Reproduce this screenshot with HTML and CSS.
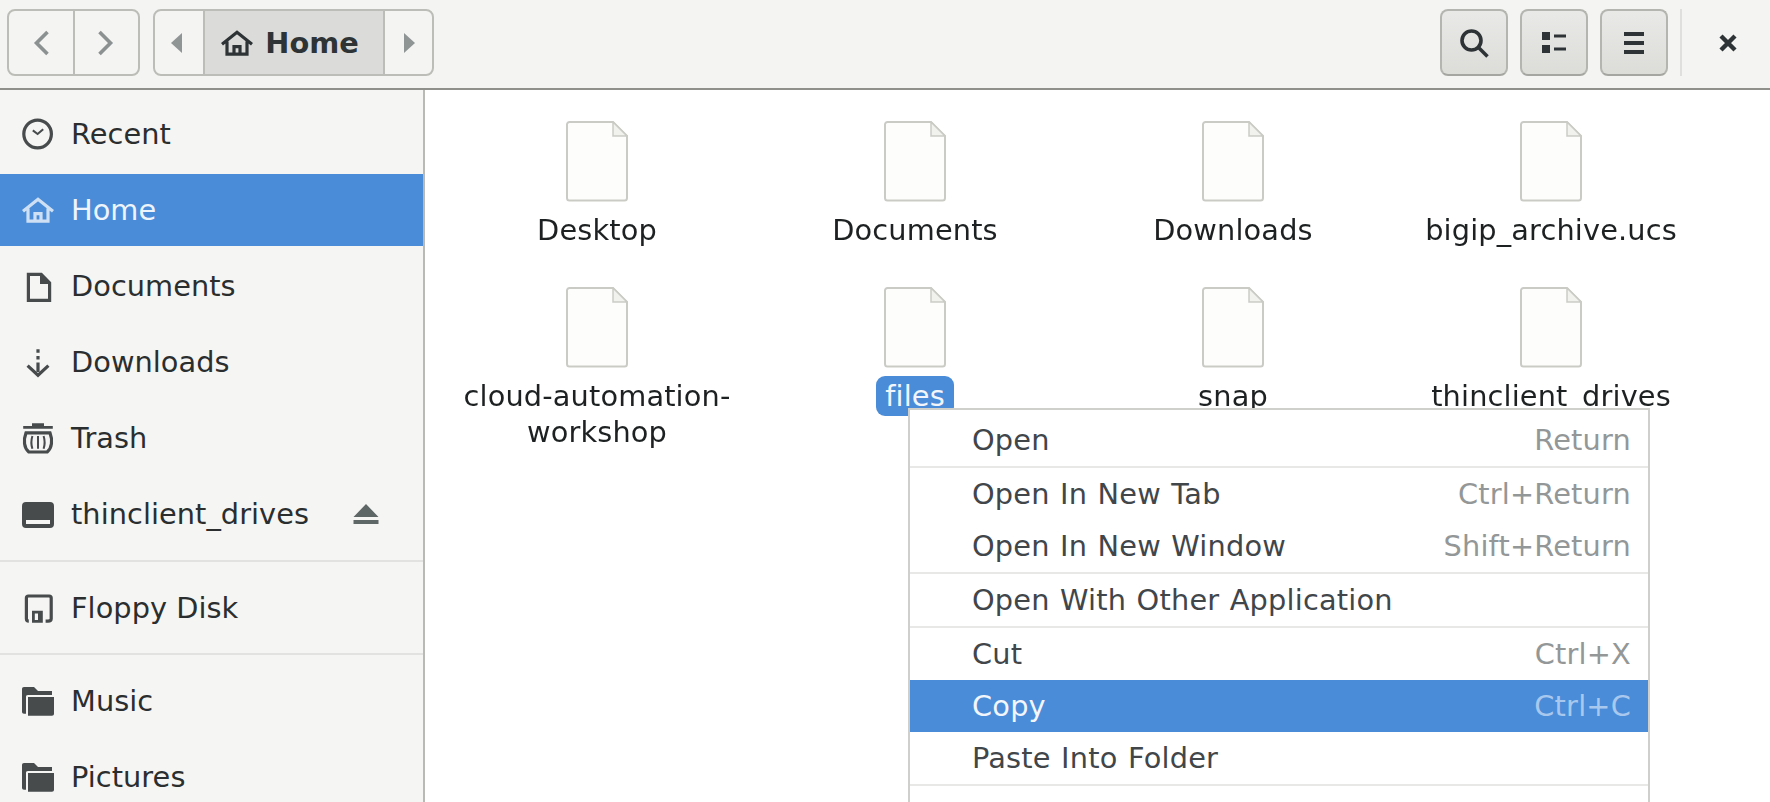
FILE: index.html
```html
<!DOCTYPE html>
<html lang="en">
<head>
    <meta charset="UTF-8">
    <title>Home</title>
    <link rel="stylesheet" href="styles.css">
</head>
<body>

<svg class="defs" width="0" height="0">
    <symbol id="page" viewBox="0 0 62 81">
        <path class="page-body" d="M3.5 1 H47 L61 15 V77 A2.5 2.5 0 0 1 58.5 79.5 H3.5 A2.5 2.5 0 0 1 1 77 V3.5 A2.5 2.5 0 0 1 3.5 1 Z"/>
        <path class="page-fold" d="M47 1 V15 H61 Z"/>
    </symbol>
</svg>

<header class="toolbar">
    <div class="btn-group nav-group">
        <div class="seg nav-btn">
            <svg class="icon" viewBox="0 0 32 32"><path class="nav-arrow" d="M22.5 5 L11.5 16 L22.5 27"/></svg>
        </div>
        <div class="seg nav-btn">
            <svg class="icon" viewBox="0 0 32 32"><path class="nav-arrow" d="M9.5 5 L20.5 16 L9.5 27"/></svg>
        </div>
    </div>
    <div class="btn-group path-group">
        <div class="seg path-arrow">
            <svg class="icon-small back" viewBox="0 0 12 20"><path d="M11 0 V20 L0 10 Z"/></svg>
        </div>
        <div class="seg path-current">
            <svg class="icon dark" viewBox="0 0 16 16"><path class="line" d="M.5 8.6 L8 2.6 L15.5 8.6 M3 7.2 V13.6 H13 V7.2 M6.5 13.6 V9.8 H9.5 V13.6"/></svg>
            <span>Home</span>
        </div>
        <div class="seg path-arrow">
            <svg class="icon-small" viewBox="0 0 12 20"><path d="M1 0 V20 L12 10 Z"/></svg>
        </div>
    </div>
    <div class="spacer"></div>
    <div class="tool-btn">
        <svg class="icon dark" viewBox="0 0 32 32"><circle class="line thick" cx="13.5" cy="13.5" r="9.5"/><path class="line thick" d="M20.5 20.5 L29.5 29.5"/></svg>
    </div>
    <div class="tool-btn">
        <svg class="icon dark" viewBox="0 0 32 32"><path d="M4 5 H12 V13 H4 Z M4 18 H12 V26 H4 Z M16 7.5 H28 V10.5 H16 Z M16 20.5 H28 V23.5 H16 Z"/></svg>
    </div>
    <div class="tool-btn">
        <svg class="icon dark" viewBox="0 0 32 32"><path d="M6 5 H26 V9 H6 Z M6 14 H26 V18 H6 Z M6 23 H26 V27 H6 Z"/></svg>
    </div>
    <div class="toolbar-sep"></div>
    <div class="close-btn">
        <svg class="icon dark" viewBox="0 0 32 32"><path class="line heavy" d="M9 9 L23 23 M23 9 L9 23"/></svg>
    </div>
</header>

<div class="main">
    <nav class="sidebar">
        <div class="side-row">
            <svg class="icon" viewBox="0 0 16 16"><circle class="line" cx="7.8" cy="8" r="6.9"/><path class="line thin" d="M5.4 6.2 L7.8 8 L10.6 5.6"/></svg>
            <span>Recent</span>
        </div>
        <div class="side-row selected">
            <svg class="icon" viewBox="0 0 16 16"><path class="line" d="M.5 8.6 L8 2.6 L15.5 8.6 M3 7.2 V13.6 H13 V7.2 M6.5 13.6 V9.8 H9.5 V13.6"/></svg>
            <span>Home</span>
        </div>
        <div class="side-row">
            <svg class="icon" viewBox="0 0 16 16"><path class="line" d="M3.2 2.2 H9.6 L13.8 6.4 V15.2 H3.2 Z"/><path d="M9 2 H10 L14 6 V7 H9 Z"/></svg>
            <span>Documents</span>
        </div>
        <div class="side-row">
            <svg class="icon" viewBox="0 0 16 16"><path d="M7.2 1.6 H8.8 V3.4 H7.2 Z M7.2 5 H8.8 V6.8 H7.2 Z M7.2 8.2 H8.8 V13 H7.2 Z"/><path class="line" d="M2.8 9.8 L8 14.6 L13.2 9.8"/></svg>
            <span>Downloads</span>
        </div>
        <div class="side-row">
            <svg class="icon" viewBox="0 0 16 16"><path d="M5 .6 H11 V2 H15.4 V3.4 H.6 V2 H5 Z"/><path class="line" d="M2 5.4 C.6 9 1 13 3.4 15 H12.6 C15 13 15.4 9 14 5.4 Z"/><path class="line thin" d="M5.2 7 C4.4 9.5 4.4 11 5.2 13.4 M8 7 V13.4 M10.8 7 C11.6 9.5 11.6 11 10.8 13.4"/></svg>
            <span>Trash</span>
        </div>
        <div class="side-row">
            <svg class="icon" viewBox="0 0 16 16"><path fill-rule="evenodd" d="M2 2 H14 A2 2 0 0 1 16 4 V13 A2 2 0 0 1 14 15 H2 A2 2 0 0 1 0 13 V4 A2 2 0 0 1 2 2 Z M2 11 V13 H14 V11 Z"/></svg>
            <span class="side-name">thinclient_drives</span>
            <svg class="eject" viewBox="0 0 26 24"><path d="M13 2 L25.5 15 H.5 Z M.5 18 H25.5 V22 H.5 Z"/></svg>
        </div>
        <div class="side-sep"></div>
        <div class="side-row">
            <svg class="icon" viewBox="0 0 16 16"><path class="line" d="M3.4 14.6 C2.4 14.6 2.2 14 2.2 13.4 V3 C2.2 2.4 2.6 2 3.2 2 H13.6 C14.2 2 14.6 2.4 14.6 3 V13.4 C14.6 14.2 14 14.6 13 14.6 H11.8"/><path fill-rule="evenodd" d="M5 9.4 H10.4 V15.4 H5 Z M6.4 10.8 V14 H8 V10.8 Z"/></svg>
            <span>Floppy Disk</span>
        </div>
        <div class="side-sep"></div>
        <div class="side-row">
            <svg class="icon" viewBox="0 0 16 16"><path d="M1 1 H6 L8 3 H15 V5 H3 C2.2 5 2 5.4 2 6 V14.4 H1 C.4 14.4 0 14 0 13.4 V2 C0 1.4 .4 1 1 1 Z M3 6 H16 V14.4 C16 15 15.6 15.4 15 15.4 H3 Z"/></svg>
            <span>Music</span>
        </div>
        <div class="side-row">
            <svg class="icon" viewBox="0 0 16 16"><path d="M1 1 H6 L8 3 H15 V5 H3 C2.2 5 2 5.4 2 6 V14.4 H1 C.4 14.4 0 14 0 13.4 V2 C0 1.4 .4 1 1 1 Z M3 6 H16 V14.4 C16 15 15.6 15.4 15 15.4 H3 Z"/></svg>
            <span>Pictures</span>
        </div>
    </nav>

    <section class="content">
        <div class="files">
            <div class="file"><svg class="page"><use href="#page"/></svg><div class="file-name">Desktop</div></div>
            <div class="file"><svg class="page"><use href="#page"/></svg><div class="file-name">Documents</div></div>
            <div class="file"><svg class="page"><use href="#page"/></svg><div class="file-name">Downloads</div></div>
            <div class="file"><svg class="page"><use href="#page"/></svg><div class="file-name">bigip_archive.ucs</div></div>
            <div class="file"><svg class="page"><use href="#page"/></svg><div class="file-name">cloud-automation-workshop</div></div>
            <div class="file"><svg class="page"><use href="#page"/></svg><div class="file-name picked">files</div></div>
            <div class="file"><svg class="page"><use href="#page"/></svg><div class="file-name">snap</div></div>
            <div class="file"><svg class="page"><use href="#page"/></svg><div class="file-name">thinclient_drives</div></div>
        </div>

        <div class="menu">
            <div class="menu-row"><span>Open</span><span class="accel">Return</span></div>
            <div class="menu-sep"></div>
            <div class="menu-row"><span>Open In New Tab</span><span class="accel">Ctrl+Return</span></div>
            <div class="menu-row"><span>Open In New Window</span><span class="accel">Shift+Return</span></div>
            <div class="menu-sep"></div>
            <div class="menu-row"><span>Open With Other Application</span></div>
            <div class="menu-sep"></div>
            <div class="menu-row"><span>Cut</span><span class="accel">Ctrl+X</span></div>
            <div class="menu-row active"><span>Copy</span><span class="accel">Ctrl+C</span></div>
            <div class="menu-row"><span>Paste Into Folder</span></div>
            <div class="menu-sep"></div>
            <div class="menu-row move-row"><span>Move to…</span></div>
        </div>
    </section>
</div>

</body>
</html>
```

FILE: styles.css
```css
html, body {
    margin: 0;
    height: 802px;
    overflow: hidden;
}
body {
    display: flex;
    flex-direction: column;
    font-family: "DejaVu Sans", sans-serif;
    font-size: 28.8px;
    color: #2e3436;
    background: #fff;
    filter: blur(0.45px);
}
svg {
    flex: none;
    fill: currentColor;
    overflow: visible;
}
.defs {
    position: absolute;
}
.line {
    fill: none;
    stroke: currentColor;
    stroke-width: 1.6;
}
.line.thin {
    stroke-width: 1;
}
.line.thick {
    stroke-width: 3.6;
}
.line.heavy {
    stroke-width: 4.4;
}
.icon {
    width: 32px;
    height: 32px;
    color: #474b4c;
}
.icon.dark {
    color: #2e3436;
}

/* toolbar */
.toolbar {
    flex: none;
    height: 90px;
    box-sizing: border-box;
    display: flex;
    align-items: flex-start;
    padding: 9px 0 0 7px;
    background: #f4f4f3;
    border-bottom: 2px solid #8f8f8c;
}
.btn-group {
    display: flex;
    height: 67px;
    box-sizing: border-box;
    border: 2px solid #bcbcb8;
    border-radius: 8px;
    overflow: hidden;
    background: #f4f4f3;
}
.seg {
    display: flex;
    align-items: center;
    justify-content: center;
}
.seg + .seg {
    border-left: 2px solid #bcbcb8;
}
.nav-group {
    width: 133px;
}
.nav-btn {
    flex: 1;
}
.nav-btn .icon {
    color: #8b9090;
}
.nav-arrow {
    fill: none;
    stroke: currentColor;
    stroke-width: 3.6;
}
.path-group {
    margin-left: 13px;
    width: 281px;
}
.path-arrow {
    width: 48px;
    color: #8f9494;
}
.path-arrow:last-child {
    width: 47px;
}
.icon-small {
    width: 12px;
    height: 20px;
}
.icon-small.back {
    margin-right: 4px;
}
.path-current {
    flex: 1;
    gap: 12px;
    padding-right: 8px;
    background: #dbdbd9;
    font-weight: bold;
}
.spacer {
    flex: 1;
}
.tool-btn {
    width: 68px;
    height: 67px;
    box-sizing: border-box;
    margin-right: 12px;
    display: flex;
    align-items: center;
    justify-content: center;
    border: 2px solid #b4b4b0;
    border-bottom-color: #a5a5a1;
    border-radius: 8px;
    background: linear-gradient(#e9e9e7, #dcdcd9);
}
.toolbar-sep {
    width: 2px;
    height: 67px;
    background: #dfdfdd;
}
.close-btn {
    width: 84px;
    height: 67px;
    padding-left: 4px;
    display: flex;
    align-items: center;
    justify-content: center;
}

/* sidebar */
.main {
    flex: 1;
    display: flex;
    min-height: 0;
}
.sidebar {
    flex: none;
    width: 425px;
    box-sizing: border-box;
    display: flex;
    flex-direction: column;
    padding-top: 6px;
    background: #f5f5f3;
    border-right: 2px solid #b9b9b6;
    color: #2b2e2f;
    letter-spacing: 0.05px;
}
.side-row {
    flex: none;
    height: 72px;
    margin: 2px 0;
    padding-left: 22px;
    padding-right: 44px;
    display: flex;
    align-items: center;
    gap: 17px;
}
.side-name {
    flex: 1;
}
.selected {
    background: #4a8cd8;
    color: #eef4fc;
}
.selected .icon {
    color: #cfe0f5;
}
.eject {
    width: 26px;
    height: 24px;
    color: #5f6666;
}
.side-sep {
    flex: none;
    height: 2px;
    margin: 7.5px 0 8px;
    background: #e2e2e0;
}

/* file grid */
.content {
    flex: 1;
    position: relative;
    min-width: 0;
}
.files {
    display: grid;
    grid-template-columns: repeat(4, 318px);
    row-gap: 39px;
    padding: 31px 0 0 13px;
    letter-spacing: 0.15px;
}
.file {
    display: flex;
    flex-direction: column;
    align-items: center;
}
.page {
    width: 62px;
    height: 81px;
    margin-bottom: 10px;
}
.page-body {
    fill: #fdfdfc;
    stroke: #cbcbc6;
    stroke-width: 2;
}
.page-fold {
    fill: #f1f1ee;
    stroke: #cbcbc6;
    stroke-width: 1.5;
}
.file-name {
    max-width: 280px;
    line-height: 36px;
    text-align: center;
    color: #1e2122;
}
.picked {
    margin-top: -2px;
    padding: 2px 9px;
    border-radius: 9px;
    background: #4a8cd8;
    color: #f2f6fc;
}

/* context menu */
.menu {
    position: absolute;
    left: 483px;
    top: 318px;
    width: 742px;
    box-sizing: border-box;
    padding-top: 4px;
    background: #fff;
    border: 2px solid #cfcfcc;
    color: #41464a;
    letter-spacing: 0.2px;
    word-spacing: 1px;
}
.menu-row {
    height: 52px;
    padding: 0 17px 0 62px;
    display: flex;
    align-items: center;
    justify-content: space-between;
}
.move-row {
    padding-top: 3px;
}
.menu-sep {
    height: 2px;
    background: #e8e8e7;
}
.accel {
    color: #939797;
}
.active {
    background: #4a8cd8;
    color: #f2f6fc;
}
.active .accel {
    color: #a9c8ee;
}
```
